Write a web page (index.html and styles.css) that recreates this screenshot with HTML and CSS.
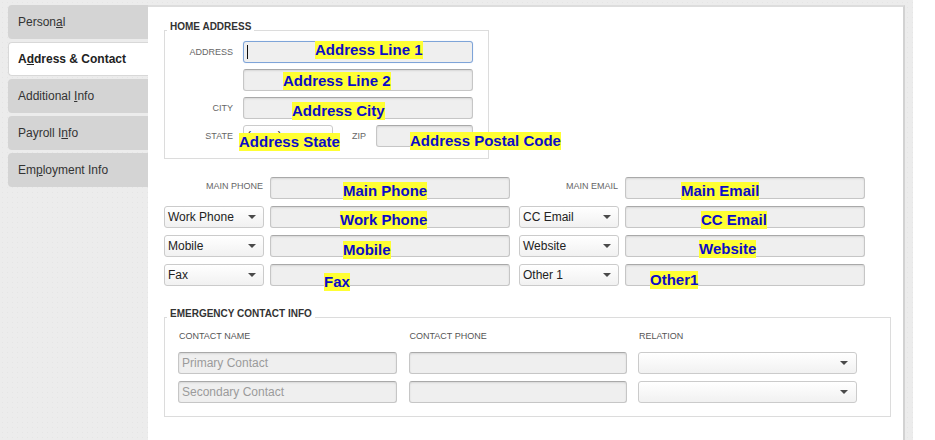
FILE: index.html
```html
<!DOCTYPE html>
<html lang="en">
<head>
<meta charset="utf-8">
<title>Address &amp; Contact</title>
<link rel="stylesheet" href="styles.css">
</head>
<body>
<div class="app">
  <nav class="tabs">
    <div class="tab">Person<u>a</u>l</div>
    <div class="tab active">A<u>d</u>dress &amp; Contact</div>
    <div class="tab">Additional <u>I</u>nfo</div>
    <div class="tab">Payroll I<u>n</u>fo</div>
    <div class="tab">Em<u>p</u>loyment Info</div>
  </nav>
  <main class="panel">
    <fieldset class="group home">
      <legend>HOME ADDRESS</legend>
      <div class="row">
        <label class="lbl">ADDRESS</label>
        <div class="field w230 focus"><input class="inp" readonly><span class="caret"></span><span class="tag t-a1">Address Line 1</span></div>
      </div>
      <div class="row">
        <span class="lbl"></span>
        <div class="field w230"><input class="inp" readonly><span class="tag t-a2">Address Line 2</span></div>
      </div>
      <div class="row">
        <label class="lbl">CITY</label>
        <div class="field w230"><input class="inp" readonly><span class="tag t-city">Address City</span></div>
      </div>
      <div class="row">
        <label class="lbl">STATE</label>
        <div class="field w90"><div class="select"><span>(none)</span></div><span class="tag t-state">Address State</span></div>
        <label class="lbl zip">ZIP</label>
        <div class="field w97"><input class="inp" readonly><span class="tag t-zip">Address Postal Code</span></div>
      </div>
    </fieldset>

    <div class="contacts">
      <label class="plabel">MAIN PHONE</label>
      <div class="field"><input class="inp" readonly><span class="tag t-main">Main Phone</span></div>
      <label class="plabel c3">MAIN EMAIL</label>
      <div class="field"><input class="inp" readonly><span class="tag t-memail">Main Email</span></div>

      <div class="select"><span>Work Phone</span><svg class="arrow" width="8" height="4" viewBox="0 0 8 4"><path d="M0 0H8L4 4Z"/></svg></div>
      <div class="field"><input class="inp" readonly><span class="tag t-work">Work Phone</span></div>
      <div class="select c3"><span>CC Email</span><svg class="arrow" width="8" height="4" viewBox="0 0 8 4"><path d="M0 0H8L4 4Z"/></svg></div>
      <div class="field"><input class="inp" readonly><span class="tag t-cc">CC Email</span></div>

      <div class="select"><span>Mobile</span><svg class="arrow" width="8" height="4" viewBox="0 0 8 4"><path d="M0 0H8L4 4Z"/></svg></div>
      <div class="field"><input class="inp" readonly><span class="tag t-mob">Mobile</span></div>
      <div class="select c3"><span>Website</span><svg class="arrow" width="8" height="4" viewBox="0 0 8 4"><path d="M0 0H8L4 4Z"/></svg></div>
      <div class="field"><input class="inp" readonly><span class="tag t-web">Website</span></div>

      <div class="select"><span>Fax</span><svg class="arrow" width="8" height="4" viewBox="0 0 8 4"><path d="M0 0H8L4 4Z"/></svg></div>
      <div class="field"><input class="inp" readonly><span class="tag t-fax">Fax</span></div>
      <div class="select c3"><span>Other 1</span><svg class="arrow" width="8" height="4" viewBox="0 0 8 4"><path d="M0 0H8L4 4Z"/></svg></div>
      <div class="field"><input class="inp" readonly><span class="tag t-other">Other1</span></div>
    </div>

    <fieldset class="group emerg">
      <legend>EMERGENCY CONTACT INFO</legend>
      <div class="egrid">
        <div class="ehead">CONTACT NAME</div>
        <div class="ehead">CONTACT PHONE</div>
        <div class="ehead">RELATION</div>
        <input class="inp" placeholder="Primary Contact" readonly>
        <input class="inp" readonly>
        <div class="select rel"><span></span><svg class="arrow" width="8" height="4" viewBox="0 0 8 4"><path d="M0 0H8L4 4Z"/></svg></div>
        <input class="inp" placeholder="Secondary Contact" readonly>
        <input class="inp" readonly>
        <div class="select rel"><span></span><svg class="arrow" width="8" height="4" viewBox="0 0 8 4"><path d="M0 0H8L4 4Z"/></svg></div>
      </div>
    </fieldset>
  </main>
</div>
</body>
</html>
```

FILE: styles.css
```css
html, body {
  margin: 0;
  padding: 0;
  background: #ffffff;
  font-family: "Liberation Sans", Arial, sans-serif;
}

.app {
  display: flex;
  width: 913px;
  height: 440px;
  box-sizing: border-box;
  padding: 5px 0 0 8px;
  background-color: #ececec;
  background-image: radial-gradient(#e5e5e5 0.6px, transparent 0.8px);
  background-size: 5px 5px;
  overflow: hidden;
}

.tabs {
  flex: none;
  width: 140px;
  display: flex;
  flex-direction: column;
  gap: 3px;
}

.tab {
  height: 34px;
  box-sizing: border-box;
  padding-left: 10px;
  line-height: 34px;
  background: #d4d4d4;
  border-radius: 4px 0 0 4px;
  font-size: 12px;
  color: #333333;
  white-space: nowrap;
}

.tab.active {
  background: #ffffff;
  font-weight: bold;
  color: #222222;
  border: 1px solid #d8d8d8;
  border-right: 0;
  line-height: 32px;
  padding-left: 9px;
}

.panel {
  flex: none;
  width: 757px;
  box-sizing: border-box;
  background: #ffffff;
  border-top: 2px solid #dddddd;
  border-right: 2px solid #d2d2d2;
  padding: 14px 0 0 16px;
}

.group {
  box-sizing: border-box;
  margin: 0;
  min-width: 0;
  border: 1px solid #dcdcdc;
}

.group legend {
  font-size: 10px;
  font-weight: bold;
  line-height: 12px;
  color: #333333;
  margin-left: 2px;
  padding: 0 3px 7px 3px;
}

.home {
  width: 325px;
  padding: 1px 0 11px 0;
}

.row {
  display: flex;
  align-items: center;
  gap: 10px;
  height: 22px;
}

.row + .row {
  margin-top: 6px;
}

.lbl {
  flex: none;
  width: 68px;
  text-align: right;
  font-size: 9px;
  color: #666666;
}

.lbl.zip {
  width: auto;
  margin-left: 9px;
}

.field {
  position: relative;
  flex: none;
  height: 22px;
}

.w230 { width: 230px; }
.w90 { width: 90px; }
.w97 { width: 97px; }

.inp {
  display: block;
  box-sizing: border-box;
  width: 100%;
  height: 22px;
  margin: 0;
  padding: 0 3px;
  border: 1px solid #c6c6c6;
  border-top-color: #a9a9a9;
  border-radius: 3px;
  background: #efefef;
  box-shadow: inset 0 1px 2px rgba(0, 0, 0, 0.1);
  font: 12px "Liberation Sans", Arial, sans-serif;
  color: #333333;
  outline: none;
}

.inp::placeholder {
  color: #9b9b9b;
}

.focus .inp {
  border-color: #7ea4d8;
  box-shadow: 0 0 1px rgba(80, 130, 210, 0.4);
}

.caret {
  position: absolute;
  left: 4px;
  top: 4px;
  width: 1px;
  height: 14px;
  background: #111111;
}

.select {
  box-sizing: border-box;
  height: 22px;
  display: flex;
  align-items: center;
  justify-content: space-between;
  padding: 0 7px 0 3px;
  border: 1px solid #cbcbcb;
  border-radius: 3px;
  background: linear-gradient(#ffffff, #f1f1f1);
  font-size: 12px;
  color: #222222;
  white-space: nowrap;
}

.select .arrow {
  flex: none;
  fill: #4a4a4a;
}

.select.rel {
  padding-right: 8px;
}

.tag {
  position: absolute;
  font-weight: bold;
  font-size: 15px;
  line-height: 18px;
  background: #ffff33;
  color: #0c0cc8;
  white-space: nowrap;
}

.t-a1 { left: 72px; top: 0; }
.t-a2 { left: 40px; top: 3px; }
.t-city { left: 49px; top: 5px; }
.t-state { left: -4px; top: 8px; }
.t-zip { left: 34px; top: 7px; }
.t-main { left: 73px; top: 5px; }
.t-work { left: 70px; top: 5px; }
.t-mob { left: 73px; top: 6px; }
.t-fax { left: 54px; top: 9px; }
.t-memail { left: 56px; top: 5px; }
.t-cc { left: 76px; top: 5px; }
.t-web { left: 74px; top: 5px; }
.t-other { left: 25px; top: 7px; }

.contacts {
  display: grid;
  grid-template-columns: 100px 240px 103px 240px;
  grid-auto-rows: 22px;
  column-gap: 6px;
  row-gap: 7px;
  margin-top: 18px;
}

.contacts .c3 {
  justify-self: end;
  width: 100px;
}

.plabel {
  align-self: start;
  font-size: 9px;
  line-height: 18px;
  color: #666666;
  text-align: right;
  padding-right: 1px;
  box-sizing: border-box;
}

.emerg {
  width: 727px;
  margin-top: 22px;
  padding: 3px 0 13px 13px;
}

.emerg legend {
  margin-left: -11px;
}

.egrid {
  display: grid;
  grid-template-columns: 219px 218px 219px;
  grid-template-rows: 15px 22px 22px;
  column-gap: 11.5px;
  row-gap: 7px;
}

.ehead {
  font-size: 9px;
  line-height: 12px;
  color: #555555;
  padding-left: 1px;
}
```
